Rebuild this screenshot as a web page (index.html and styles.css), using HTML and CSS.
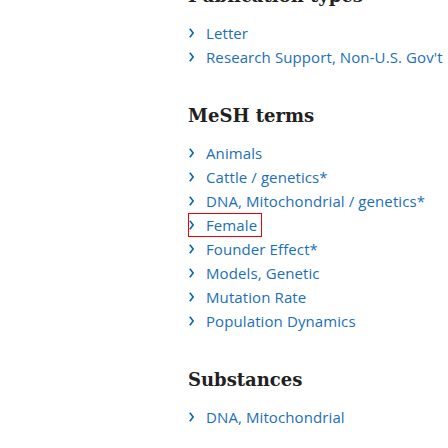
FILE: index.html
```html
<!DOCTYPE html>
<html>
<head>
<meta charset="utf-8">
<link rel="stylesheet" href="styles.css">
</head>
<body>
<main class="content">
  <section class="section">
    <h2 class="heading">Publication types</h2>
    <ul class="list">
      <li class="item"><svg class="chev" viewBox="0 0 5 10"><path d="M0.8 0.8 L4.2 5 L0.8 9.2"/></svg><span>Letter</span></li>
      <li class="item"><svg class="chev" viewBox="0 0 5 10"><path d="M0.8 0.8 L4.2 5 L0.8 9.2"/></svg><span>Research Support, Non-U.S. Gov't</span></li>
    </ul>
  </section>
  <section class="section">
    <h2 class="heading">MeSH terms</h2>
    <ul class="list">
      <li class="item"><svg class="chev" viewBox="0 0 5 10"><path d="M0.8 0.8 L4.2 5 L0.8 9.2"/></svg><span>Animals</span></li>
      <li class="item"><svg class="chev" viewBox="0 0 5 10"><path d="M0.8 0.8 L4.2 5 L0.8 9.2"/></svg><span>Cattle / genetics*</span></li>
      <li class="item"><svg class="chev" viewBox="0 0 5 10"><path d="M0.8 0.8 L4.2 5 L0.8 9.2"/></svg><span>DNA, Mitochondrial / genetics*</span></li>
      <li class="item highlighted"><svg class="chev" viewBox="0 0 5 10"><path d="M0.8 0.8 L4.2 5 L0.8 9.2"/></svg><span>Female</span></li>
      <li class="item"><svg class="chev" viewBox="0 0 5 10"><path d="M0.8 0.8 L4.2 5 L0.8 9.2"/></svg><span>Founder Effect*</span></li>
      <li class="item"><svg class="chev" viewBox="0 0 5 10"><path d="M0.8 0.8 L4.2 5 L0.8 9.2"/></svg><span>Models, Genetic</span></li>
      <li class="item"><svg class="chev" viewBox="0 0 5 10"><path d="M0.8 0.8 L4.2 5 L0.8 9.2"/></svg><span>Mutation Rate</span></li>
      <li class="item"><svg class="chev" viewBox="0 0 5 10"><path d="M0.8 0.8 L4.2 5 L0.8 9.2"/></svg><span>Population Dynamics</span></li>
    </ul>
  </section>
  <section class="section">
    <h2 class="heading">Substances</h2>
    <ul class="list">
      <li class="item"><svg class="chev" viewBox="0 0 5 10"><path d="M0.8 0.8 L4.2 5 L0.8 9.2"/></svg><span>DNA, Mitochondrial</span></li>
    </ul>
  </section>
</main>
</body>
</html>
```
FILE: styles.css
```css
html, body {
  margin: 0;
  padding: 0;
  background: #ffffff;
}
.content {
  padding-left: 188px;
  margin-top: -18px;
  font-family: "Open Sans", "Noto Sans", sans-serif;
}
.section {
  margin-bottom: 33.5px;
}
.heading {
  margin: 0 0 10.5px 0;
  font-family: "DejaVu Serif", "Liberation Serif", serif;
  font-weight: bold;
  font-size: 18px;
  line-height: 28px;
  color: #212121;
}
.list {
  list-style: none;
  margin: 0;
  padding: 0;
}
.item {
  display: flex;
  align-items: center;
  height: 24px;
  font-size: 15px;
  letter-spacing: 0.1px;
  color: #1a6fba;
  width: max-content;
}
.chev {
  width: 5px;
  height: 10px;
  margin-left: 1px;
  margin-right: 12px;
  fill: none;
  stroke: #0a66b0;
  stroke-width: 1.7;
}
.highlighted {
  outline: 1px solid #e8000b;
  outline-offset: -1px;
  padding-right: 5px;
}
```
